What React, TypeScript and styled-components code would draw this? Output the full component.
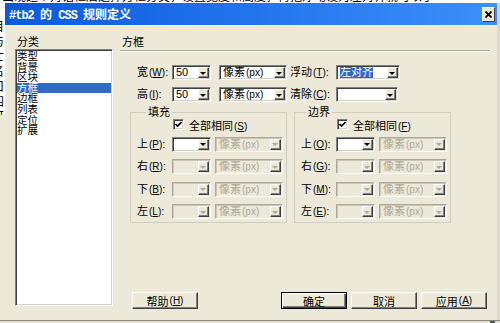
import React from "react";
import styled, { createGlobalStyle } from "styled-components";

const GlobalStyle = createGlobalStyle`
  html, body {
    margin: 0;
    padding: 0;
    background: #fff;
  }
  body {
    font-family: "Liberation Sans", "Noto Sans CJK SC", sans-serif;
    font-size: 11px;
    color: #000;
  }
`;

const Page = styled.div`
  width: 500px;
  height: 323px;
  overflow: hidden;
  display: flex;
  flex-direction: column;
  background: #ece9d8;
`;

const TopStrip = styled.div`
  flex: none;
  height: 3px;
  overflow: hidden;
  background: #fff;
`;

const TopStripText = styled.div`
  margin-top: -10px;
  padding-left: 2px;
  white-space: nowrap;
  font-family: "Noto Sans CJK SC", sans-serif;
  font-size: 12px;
  line-height: 12px;
`;

const Middle = styled.div`
  flex: none;
  height: 317px;
  display: flex;
`;

const LeftStrip = styled.div`
  flex: none;
  width: 5px;
  display: flex;
  flex-direction: column;
`;

const LeftStripText = styled.div`
  height: 112px;
  overflow: hidden;
  background: #fff;
  font-family: "Noto Sans CJK SC", sans-serif;
  font-size: 12px;
  line-height: 15px;
  & > div {
    margin-left: -8px;
  }
`;

const Dialog = styled.div`
  flex: none;
  width: 492px;
  display: flex;
  flex-direction: column;
  background: #ece9d8;
  border-right: 3px solid #dcd9cb;
`;

const TitleBar = styled.div`
  flex: none;
  height: 22px;
  display: flex;
  align-items: center;
  justify-content: space-between;
  padding: 0 2px 0 4px;
  background: linear-gradient(to right, #0a5adb 0%, #2577ee 55%, #3c90f9 100%);
  border-bottom: 1px solid #f6f5ef;
`;

const Title = styled.span`
  color: #fff;
  font-family: "Liberation Mono", monospace;
  font-weight: bold;
  font-size: 12px;
  letter-spacing: -1px;
  white-space: nowrap;
`;

const TitleCjk = styled.span`
  font-family: "Noto Sans CJK SC", sans-serif;
  letter-spacing: 0;
`;

const CloseButton = styled.div`
  width: 13px;
  height: 15px;
  box-sizing: border-box;
  background: #ece9d8;
  border: 1px solid;
  border-color: #fff #404040 #404040 #fff;
  display: flex;
  align-items: center;
  justify-content: center;
`;

const Body = styled.div`
  flex: 1;
  display: flex;
  gap: 7px;
  padding: 11px 7px 0 10px;
`;

const LeftColumn = styled.div`
  flex: none;
  width: 98px;
  display: flex;
  flex-direction: column;
`;

const SectionLabel = styled.div`
  height: 11px;
  line-height: 11px;
  padding-left: 2px;
  white-space: nowrap;
`;

const CategoryList = styled.div`
  margin-top: 1px;
  height: 257px;
  box-sizing: border-box;
  background: #fff;
  border: 1px solid;
  border-color: #808080 #fff #fff #808080;
  box-shadow: inset 1px 1px 0 #404040, inset -1px -1px 0 #d4d0c8;
  padding: 1px;
`;

const CategoryItem = styled.div<{ $selected?: boolean }>`
  height: 10.6px;
  line-height: 10.6px;
  font-size: 10.5px;
  white-space: nowrap;
  overflow: hidden;
  background: ${(p) => (p.$selected ? "#316ac5" : "transparent")};
  color: ${(p) => (p.$selected ? "#fff" : "#000")};
`;

const RightColumn = styled.div`
  flex: none;
  width: 370px;
  display: flex;
  flex-direction: column;
`;

const Separator = styled.div`
  margin-top: 2px;
  border-top: 1px solid #aca899;
  border-bottom: 1px solid #fff;
`;

const FormRow = styled.div<{ $top: number }>`
  display: flex;
  align-items: center;
  height: 15px;
  margin-top: ${(p) => p.$top}px;
  padding-left: 17px;
`;

const Caption = styled.span<{ $w: number; $ml?: number }>`
  flex: none;
  width: ${(p) => p.$w}px;
  margin-left: ${(p) => p.$ml ?? 0}px;
  white-space: nowrap;
  line-height: 15px;
`;

const Acc = styled.span`
  font-family: "Liberation Sans", sans-serif;
  font-size: 10px;
  margin-left: 1px;
`;

const Combo = styled.div<{ $w: number; $ml?: number; $disabled?: boolean }>`
  flex: none;
  width: ${(p) => p.$w}px;
  height: 15px;
  margin-left: ${(p) => p.$ml ?? 0}px;
  box-sizing: border-box;
  display: flex;
  padding: 1px;
  border: 1px solid;
  border-color: ${(p) => (p.$disabled ? "#aca899 #fff #fff #aca899" : "#808080 #fff #fff #808080")};
  box-shadow: ${(p) =>
    p.$disabled
      ? "inset 1px 1px 0 #c9c6b8, inset -1px -1px 0 #ece9d8"
      : "inset 1px 1px 0 #404040, inset -1px -1px 0 #d4d0c8"};
  background: ${(p) => (p.$disabled ? "#ece9d8" : "#fff")};
`;

const ComboText = styled.div<{ $disabled?: boolean }>`
  flex: 1;
  min-width: 0;
  overflow: hidden;
  white-space: nowrap;
  line-height: 11px;
  padding-left: 2px;
  color: ${(p) => (p.$disabled ? "#aca899" : "#000")};
`;

const Highlight = styled.span`
  background: #316ac5;
  color: #fff;
`;

const DropButton = styled.div<{ $disabled?: boolean }>`
  flex: none;
  width: 11px;
  box-sizing: border-box;
  background: #ece9d8;
  border: 1px solid;
  border-color: #fff #404040 #404040 #fff;
  box-shadow: inset -1px -1px 0 #808080;
  display: flex;
  align-items: center;
  justify-content: center;
  &::after {
    content: "";
    width: 0;
    height: 0;
    margin: 1px 1px 0 0;
    border-left: 3px solid transparent;
    border-right: 3px solid transparent;
    border-top: 3px solid ${(p) => (p.$disabled ? "#aca899" : "#000")};
  }
`;

const Groups = styled.div`
  display: flex;
  gap: 7px;
  margin-top: 10px;
  padding-left: 10px;
`;

const Group = styled.div`
  flex: none;
  width: 157px;
  box-sizing: border-box;
  padding: 0 0 3px 6px;
  border: 1px solid #d0cdbe;
`;

const Legend = styled.div<{ $offset: number }>`
  width: fit-content;
  height: 11px;
  margin: -6px 0 0 ${(p) => p.$offset}px;
  padding: 0 2px;
  line-height: 11px;
  background: #ece9d8;
`;

const CheckRow = styled.div<{ $indent: number }>`
  display: flex;
  align-items: center;
  height: 13px;
  padding-left: ${(p) => p.$indent}px;
  gap: 5px;
  white-space: nowrap;
`;

const CheckBox = styled.span`
  flex: none;
  width: 11px;
  height: 11px;
  box-sizing: border-box;
  background: #fff;
  border: 1px solid;
  border-color: #808080 #fff #fff #808080;
  box-shadow: inset 1px 1px 0 #404040, inset -1px -1px 0 #d4d0c8;
  display: flex;
  align-items: center;
  justify-content: center;
`;

const GroupRows = styled.div`
  display: flex;
  flex-direction: column;
  gap: 7.5px;
  margin-top: 5.5px;
`;

const GroupRow = styled.div`
  display: flex;
  align-items: center;
  height: 15px;
`;

const ButtonRow = styled.div`
  display: flex;
  gap: 4px;
  margin-top: 69px;
  padding: 0 3px 0 12px;
`;

const Spacer = styled.div`
  flex: 1;
`;

const Button = styled.div<{ $default?: boolean }>`
  flex: none;
  width: 66px;
  height: 17px;
  box-sizing: border-box;
  display: flex;
  align-items: center;
  justify-content: center;
  white-space: nowrap;
  background: #ece9d8;
  border: 1px solid;
  border-color: ${(p) => (p.$default ? "#000" : "#fff #404040 #404040 #fff")};
  box-shadow: ${(p) =>
    p.$default
      ? "inset 1px 1px 0 #fff, inset -1px -1px 0 #404040, inset -2px -2px 0 #808080"
      : "inset -1px -1px 0 #808080"};
`;

const BottomStrip = styled.div`
  flex: none;
  height: 3px;
  box-sizing: border-box;
  border-top: 1px solid #8a877a;
  background: #e4e1d4;
  display: flex;
  justify-content: flex-end;
  padding-right: 5px;
`;

const ScrollBit = styled.div`
  width: 5px;
  background: #5a5a5a;
`;

type Acc = { text: string; k: string };

const Label = ({ text, k }: Acc) => (
  <>
    {text}
    <Acc>
      (<u>{k}</u>)
    </Acc>
    :
  </>
);

const ComboBox = ({
  w,
  ml,
  disabled,
  children,
}: {
  w: number;
  ml?: number;
  disabled?: boolean;
  children?: React.ReactNode;
}) => (
  <Combo $w={w} $ml={ml} $disabled={disabled}>
    <ComboText $disabled={disabled}>{children}</ComboText>
    <DropButton $disabled={disabled} />
  </Combo>
);

const Unit = () => (
  <>
    像素<Acc>(px)</Acc>
  </>
);

const categories = ["类型", "背景", "区块", "方框", "边框", "列表", "定位", "扩展"];

const padding = [
  { text: "上", k: "P" },
  { text: "右", k: "R" },
  { text: "下", k: "B" },
  { text: "左", k: "L" },
];

const margin = [
  { text: "上", k: "O" },
  { text: "右", k: "G" },
  { text: "下", k: "M" },
  { text: "左", k: "E" },
];

const BoxGroup = ({
  title,
  offset,
  checkKey,
  rows,
}: {
  title: string;
  offset: number;
  checkKey: string;
  rows: Acc[];
}) => (
  <Group>
    <Legend $offset={offset}>{title}</Legend>
    <CheckRow $indent={36}>
      <CheckBox>
        <svg width="7" height="7" viewBox="0 0 7 7">
          <path d="M0.5 3 L2.5 5 L6.5 1" fill="none" stroke="#000" strokeWidth="1.6" />
        </svg>
      </CheckBox>
      <span>
        全部相同
        <Acc>
          (<u>{checkKey}</u>)
        </Acc>
      </span>
    </CheckRow>
    <GroupRows>
      {rows.map((r, i) => (
        <GroupRow key={r.k}>
          <Caption $w={35}>
            <Label text={r.text} k={r.k} />
          </Caption>
          <ComboBox w={39} disabled={i > 0} />
          <ComboBox w={68} ml={4} disabled>
            <Unit />
          </ComboBox>
        </GroupRow>
      ))}
    </GroupRows>
  </Group>
);

const App = () => {
  return (
    <Page>
      <GlobalStyle />
      <TopStrip>
        <TopStripText>
          出现这个对话框后选择方框分类，设置宽度和高度，再把浮动设为左对齐就可以了
        </TopStripText>
      </TopStrip>
      <Middle>
        <LeftStrip>
          <LeftStripText>
            {["？", "目", "与", "亡", "名", "口", "四", "可"].map((c, i) => (
              <div key={i}>{c}</div>
            ))}
          </LeftStripText>
        </LeftStrip>
        <Dialog>
          <TitleBar>
            <Title>
              #tb2 <TitleCjk>的</TitleCjk> CSS <TitleCjk>规则定义</TitleCjk>
            </Title>
            <CloseButton>
              <svg width="7" height="7" viewBox="0 0 7 7">
                <path d="M0.5 0.5 L6.5 6.5 M6.5 0.5 L0.5 6.5" stroke="#000" strokeWidth="1.8" />
              </svg>
            </CloseButton>
          </TitleBar>
          <Body>
            <LeftColumn>
              <SectionLabel>分类</SectionLabel>
              <CategoryList>
                {categories.map((c) => (
                  <CategoryItem key={c} $selected={c === "方框"}>
                    {c}
                  </CategoryItem>
                ))}
              </CategoryList>
            </LeftColumn>
            <RightColumn>
              <SectionLabel>方框</SectionLabel>
              <Separator />
              <FormRow $top={13}>
                <Caption $w={35}>
                  <Label text="宽" k="W" />
                </Caption>
                <ComboBox w={39}>50</ComboBox>
                <ComboBox w={68} ml={8}>
                  <Unit />
                </ComboBox>
                <Caption $w={46} $ml={3}>
                  <Label text="浮动" k="T" />
                </Caption>
                <ComboBox w={64}>
                  <Highlight>左对齐</Highlight>
                </ComboBox>
              </FormRow>
              <FormRow $top={7}>
                <Caption $w={35}>
                  <Label text="高" k="I" />
                </Caption>
                <ComboBox w={39}>50</ComboBox>
                <ComboBox w={68} ml={8}>
                  <Unit />
                </ComboBox>
                <Caption $w={46} $ml={3}>
                  <Label text="清除" k="C" />
                </Caption>
                <ComboBox w={62} />
              </FormRow>
              <Groups>
                <BoxGroup title="填充" offset={9} checkKey="S" rows={padding} />
                <BoxGroup title="边界" offset={5} checkKey="F" rows={margin} />
              </Groups>
              <ButtonRow>
                <Button>
                  帮助<Acc>(<u>H</u>)</Acc>
                </Button>
                <Spacer />
                <Button $default>确定</Button>
                <Button>取消</Button>
                <Button>
                  应用<Acc>(<u>A</u>)</Acc>
                </Button>
              </ButtonRow>
            </RightColumn>
          </Body>
        </Dialog>
      </Middle>
      <BottomStrip>
        <ScrollBit />
      </BottomStrip>
    </Page>
  );
};

export default App;
